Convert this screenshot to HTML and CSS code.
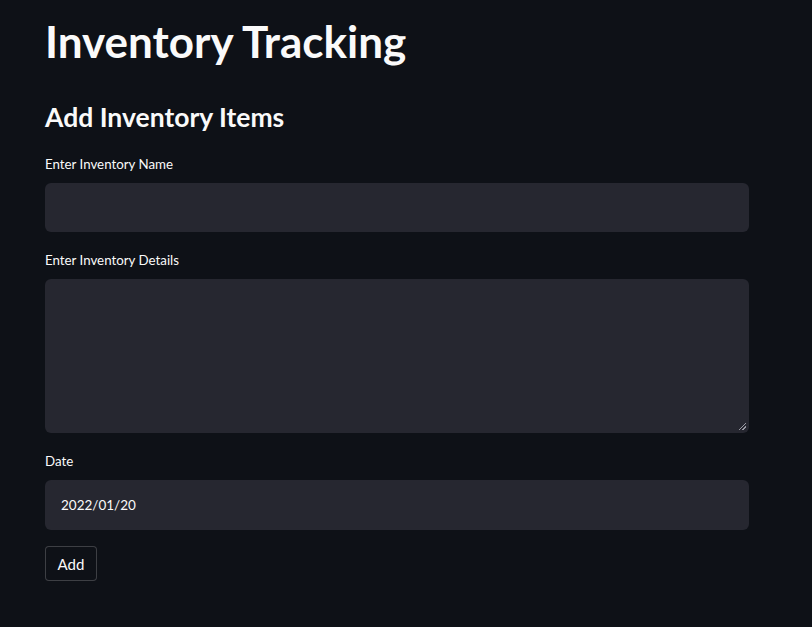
FILE: index.html
```html
<!DOCTYPE html>
<html lang="en">
<head>
<meta charset="utf-8">
<title>Inventory Tracking</title>
<link rel="stylesheet" href="styles.css">
</head>
<body>
<main class="app">
  <h1 class="title">Inventory Tracking</h1>
  <h2 class="subheader">Add Inventory Items</h2>
  <div class="field">
    <label class="label first">Enter Inventory Name</label>
    <div class="input"></div>
  </div>
  <div class="field">
    <label class="label">Enter Inventory Details</label>
    <div class="textarea"><span class="grip"></span></div>
  </div>
  <div class="field">
    <label class="label">Date</label>
    <div class="input date">2022/01/20</div>
  </div>
  <button class="btn">Add</button>
</main>
</body>
</html>
```
FILE: styles.css
```css
html, body {
  margin: 0;
  padding: 0;
  background: #0e1117;
  color: #fafafa;
  font-family: "Lato", "Noto Sans", sans-serif;
}
.app {
  width: 704px;
  padding: 11px 0 0 45px;
  display: flex;
  flex-direction: column;
}
.title {
  margin: 0;
  font-size: 44px;
  font-weight: 700;
  line-height: 60px;
}
.subheader {
  margin: 28px 0 0 0;
  font-size: 26.5px;
  font-weight: 700;
  line-height: 36px;
}
.field {
  display: flex;
  flex-direction: column;
}
.label {
  font-size: 13.3px;
  line-height: 20px;
  margin-top: 18px;
  margin-bottom: 9px;
}
.label.first { margin-top: 19px; }
.input {
  height: 49px;
  background: #262730;
  border-radius: 6px;
  box-sizing: border-box;
  display: flex;
  align-items: center;
  padding-left: 16px;
  font-size: 13.5px;
}
.date { height: 50px; }
.textarea {
  position: relative;
  height: 154px;
  background: #262730;
  border-radius: 6px;
}
.grip {
  position: absolute;
  right: 3px;
  bottom: 3px;
  width: 7px;
  height: 7px;
  background: linear-gradient(135deg, transparent 45%, #9a9aa4 45%, #9a9aa4 55%, transparent 55%, transparent 70%, #9a9aa4 70%, #9a9aa4 80%, transparent 80%);
}
.btn {
  align-self: flex-start;
  margin-top: 16px;
  width: 52px;
  height: 35px;
  background: #0e1117;
  color: #fafafa;
  border: 1px solid rgba(250, 250, 250, 0.2);
  border-radius: 4px;
  font-family: inherit;
  font-size: 15px;
  padding: 0;
}
```
